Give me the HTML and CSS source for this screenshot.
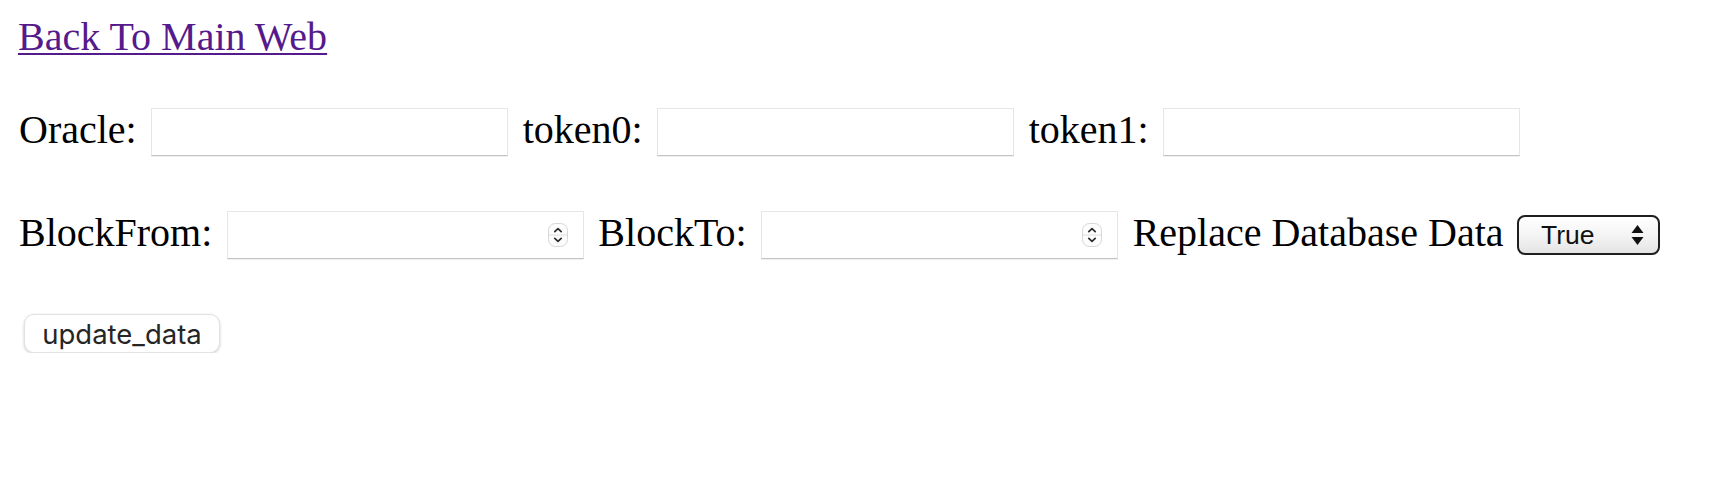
FILE: index.html
```html
<!DOCTYPE html>
<html>
<head>
<meta charset="utf-8">
<title>Update Data</title>
<link rel="stylesheet" href="styles.css">
</head>
<body>
<div class="page">
  <div class="nav"><a class="back" href="#">Back To Main Web</a></div>

  <div class="row row-first">
    <span class="label">Oracle:</span>
    <div class="field"><input class="text-input" type="text"></div>
    <span class="label">token0:</span>
    <div class="field"><input class="text-input" type="text"></div>
    <span class="label">token1:</span>
    <div class="field"><input class="text-input" type="text"></div>
  </div>

  <div class="row row-second">
    <span class="label">BlockFrom:</span>
    <div class="field field-number">
      <input class="text-input" type="text" inputmode="numeric">
      <svg class="spinner" width="20" height="24" viewBox="0 0 20 24">
        <rect x="0.5" y="0.5" width="19" height="23" rx="7" fill="#fdfdfd" stroke="#d6d6d6"/>
        <line x1="1" y1="12" x2="19" y2="12" stroke="#dcdcdc"/>
        <path d="M6.8 8.6 L10 5.6 L13.2 8.6" fill="none" stroke="#2b2b2b" stroke-width="1.7" stroke-linecap="round" stroke-linejoin="round"/>
        <path d="M6.8 15.4 L10 18.4 L13.2 15.4" fill="none" stroke="#2b2b2b" stroke-width="1.7" stroke-linecap="round" stroke-linejoin="round"/>
      </svg>
    </div>
    <span class="label">BlockTo:</span>
    <div class="field field-number">
      <input class="text-input" type="text" inputmode="numeric">
      <svg class="spinner" width="20" height="24" viewBox="0 0 20 24">
        <rect x="0.5" y="0.5" width="19" height="23" rx="7" fill="#fdfdfd" stroke="#d6d6d6"/>
        <line x1="1" y1="12" x2="19" y2="12" stroke="#dcdcdc"/>
        <path d="M6.8 8.6 L10 5.6 L13.2 8.6" fill="none" stroke="#2b2b2b" stroke-width="1.7" stroke-linecap="round" stroke-linejoin="round"/>
        <path d="M6.8 15.4 L10 18.4 L13.2 15.4" fill="none" stroke="#2b2b2b" stroke-width="1.7" stroke-linecap="round" stroke-linejoin="round"/>
      </svg>
    </div>
    <span class="label">Replace Database Data</span>
    <div class="select-box">
      <select class="select">
        <option>True</option>
        <option>False</option>
      </select>
      <svg class="select-arrows" width="13" height="20" viewBox="0 0 13 20">
        <polygon points="6.5,0 12.5,8 0.5,8" fill="#111"/>
        <polygon points="0.5,12 12.5,12 6.5,20" fill="#111"/>
      </svg>
    </div>
  </div>

  <div class="actions">
    <button class="btn" type="button">update_data</button>
  </div>
</div>
</body>
</html>
```

FILE: styles.css
```css
html, body {
  margin: 0;
  padding: 0;
  background: #ffffff;
}

.page {
  padding: 14px 16px 0 18px;
  font-family: "Liberation Serif", "Times New Roman", serif;
  font-size: 40px;
  color: #000;
}

.nav {
  line-height: 45px;
  height: 45px;
}

.back {
  color: #551a8b;
  text-decoration: underline;
  text-decoration-thickness: 2px;
  text-underline-offset: 3px;
}

.row {
  display: flex;
  align-items: flex-start;
  gap: 14.5px;
  padding-left: 1px;
}

.row-first {
  margin-top: 49px;
}

.row-second {
  margin-top: 55px;
}

.label {
  line-height: 44px;
  white-space: nowrap;
}

.field {
  width: 357px;
  height: 48px;
  box-sizing: border-box;
  border: 1px solid #e6e6e6;
  border-bottom-color: #c4c4c4;
  box-shadow: 0 1px 0 rgba(0, 0, 0, 0.06);
  background: #fff;
  display: flex;
  align-items: center;
  flex: none;
}

.field-number {
  padding-right: 15px;
}

.text-input {
  flex: 1;
  min-width: 0;
  height: 100%;
  border: none;
  outline: none;
  background: transparent;
  padding: 0 8px;
  font-family: "Liberation Sans", Arial, sans-serif;
  font-size: 24px;
}

.spinner {
  flex: none;
  display: block;
}

.select-box {
  align-self: center;
  margin-left: -1px;
  width: 143px;
  height: 40px;
  box-sizing: border-box;
  border: 2px solid #1f1f1f;
  border-radius: 8px;
  background: linear-gradient(#ffffff, #f3f3f3 55%, #e4e4e4);
  display: flex;
  align-items: center;
  padding: 0 14px 0 22px;
  flex: none;
}

.select {
  -webkit-appearance: none;
  appearance: none;
  flex: 1;
  min-width: 0;
  border: none;
  outline: none;
  background: transparent;
  padding: 0;
  margin: 0;
  font-family: "Liberation Sans", Arial, sans-serif;
  font-size: 26.5px;
  color: #111;
}

.select-arrows {
  flex: none;
  display: block;
}

.actions {
  margin-top: 55px;
  padding-left: 6px;
}

.btn {
  width: 196px;
  height: 39px;
  box-sizing: border-box;
  margin: 0;
  padding: 0;
  border: 1px solid #e2e2e2;
  border-radius: 10px;
  background: #fff;
  box-shadow: 0 1px 3px rgba(0, 0, 0, 0.2);
  font-family: Inter, "Noto Sans", sans-serif;
  font-size: 27.5px;
  color: #262626;
  display: flex;
  align-items: center;
  justify-content: center;
}
```
